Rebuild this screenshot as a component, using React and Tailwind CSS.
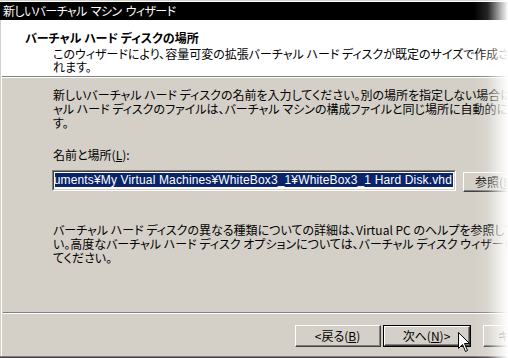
import React from "react";

function ClassicButton({ children, isDefault = false, className = "" }) {
  if (isDefault) {
    return (
      <div className={"h-[22px] border border-black " + className}>
        <div className="h-full border-t border-l border-white border-r border-b border-r-[#404040] border-b-[#404040]">
          <div className="h-full border-r border-b border-r-[#808080] border-b-[#808080] flex items-center justify-center whitespace-nowrap leading-[14px]">
            {children}
          </div>
        </div>
      </div>
    );
  }
  return (
    <div className={"h-[22px] border-t border-l border-white border-r border-b border-r-[#404040] border-b-[#404040] " + className}>
      <div className="h-full border-r border-b border-r-[#808080] border-b-[#808080] flex items-center justify-center whitespace-nowrap leading-[14px]">
        {children}
      </div>
    </div>
  );
}

export default function App() {
  return (
    <div className="relative w-[508px] h-[358px] overflow-hidden bg-[#d4d0c8] font-['Noto_Sans_CJK_JP',sans-serif] [font-feature-settings:'palt'] text-[12px] text-black">
      <div className="flex flex-col h-full border-t border-[#d4d0c8] border-b border-b-[#404040]">
        <div className="flex flex-col h-full border-t border-white border-b border-b-[#808080]">
          {/* Title bar */}
          <div className="h-[18px] shrink-0 bg-black text-white pl-[3px] leading-[18px] whitespace-nowrap tracking-[-0.6px] [word-spacing:2px]">
            新しいバーチャル マシン ウィザード
          </div>
          <div className="flex-1 flex flex-col border-l border-[#d4d0c8]">
            <div className="flex-1 flex flex-col border-l border-white">
              {/* Header */}
              <div className="h-[57px] shrink-0 bg-white border-b border-[#808080] pl-[23px] pt-[11px] whitespace-nowrap">
                <div className="font-bold leading-[14px]">バーチャル ハード ディスクの場所</div>
                <div className="pl-[28px] mt-[2px] leading-[13px]">
                  <div>このウィザードにより、容量可変の拡張バーチャル ハード ディスクが既定のサイズで作成さ</div>
                  <div>れます。</div>
                </div>
              </div>
              {/* Body */}
              <div className="flex-1 flex flex-col border-t border-white">
                <div className="flex-1 pl-[50px] pt-[10px] whitespace-nowrap">
                  <div className="pl-px leading-[14px]">
                    <div>新しいバーチャル ハード ディスクの名前を入力してください。別の場所を指定しない場合は、バーチ</div>
                    <div>ャル ハード ディスクのファイルは、バーチャル マシンの構成ファイルと同じ場所に自動的に保存されま</div>
                    <div>す。</div>
                  </div>
                  <div className="pl-px mt-[18px] leading-[14px]">
                    名前と場所(<span className="underline">L</span>):
                  </div>
                  <div className="mt-[8px] flex items-start">
                    <div className="w-[404px] h-[21px] shrink-0 border-t border-l border-[#808080] border-r border-b border-r-white border-b-white">
                      <div className="h-full border-t border-l border-[#404040] border-r border-b border-r-[#d4d0c8] border-b-[#d4d0c8] bg-white pt-px px-px">
                        <div className="h-[14px] bg-[#0a246a] text-white flex justify-end overflow-hidden leading-[14px] pr-px font-['Liberation_Sans',sans-serif] tracking-[0.15px]">
                          <span className="shrink-0">C:¥Documents and Settings¥Owner¥My Documents¥My Virtual Machines¥WhiteBox3_1¥WhiteBox3_1 Hard Disk.vhd</span>
                        </div>
                      </div>
                    </div>
                    <ClassicButton className="ml-[7px] mt-[2px] !h-[20px] w-[75px] shrink-0">
                      参照(<span className="underline">R</span>)...
                    </ClassicButton>
                  </div>
                  <div className="pl-px mt-[31px] leading-[14px]">
                    <div>バーチャル ハード ディスクの異なる種類についての詳細は、Virtual PC のヘルプを参照してくださ</div>
                    <div>い。高度なバーチャル ハード ディスク オプションについては、バーチャル ディスク ウィザードを使用し</div>
                    <div>てください。</div>
                  </div>
                </div>
                {/* Bottom */}
                <div className="h-[44px] shrink-0 flex flex-col">
                  <div className="ml-px border-t border-[#808080] border-b border-b-white" />
                  <div className="flex pl-[293px] pt-[11px]">
                    <ClassicButton className="w-[86px] shrink-0">
                      &lt;戻る(<span className="underline">B</span>)
                    </ClassicButton>
                    <ClassicButton isDefault className="ml-[2px] w-[88px] shrink-0">
                      次へ(<span className="underline">N</span>)&gt;
                    </ClassicButton>
                    <ClassicButton className="ml-[12px] w-[86px] shrink-0">
                      キャンセル
                    </ClassicButton>
                  </div>
                </div>
              </div>
            </div>
          </div>
        </div>
      </div>

      {/* right-edge fade */}
      <div className="absolute inset-y-0 right-0 w-[34px] bg-[linear-gradient(to_right,rgba(255,255,255,0),rgba(255,255,255,0.15)_40%,rgba(255,255,255,0.7)_78%,#ffffff)]" />

      {/* mouse cursor */}
      <svg className="absolute left-[457px] top-[331px]" width="14" height="22" viewBox="0 0 14 22">
        <path d="M1.5 1.5 L1.5 17.5 L5.5 13.5 L8.5 20.5 L10.5 19.5 L7.5 12.5 L12.5 12.5 Z" fill="#ffffff" stroke="#000000" strokeWidth="1" strokeLinejoin="miter" />
      </svg>
    </div>
  );
}
